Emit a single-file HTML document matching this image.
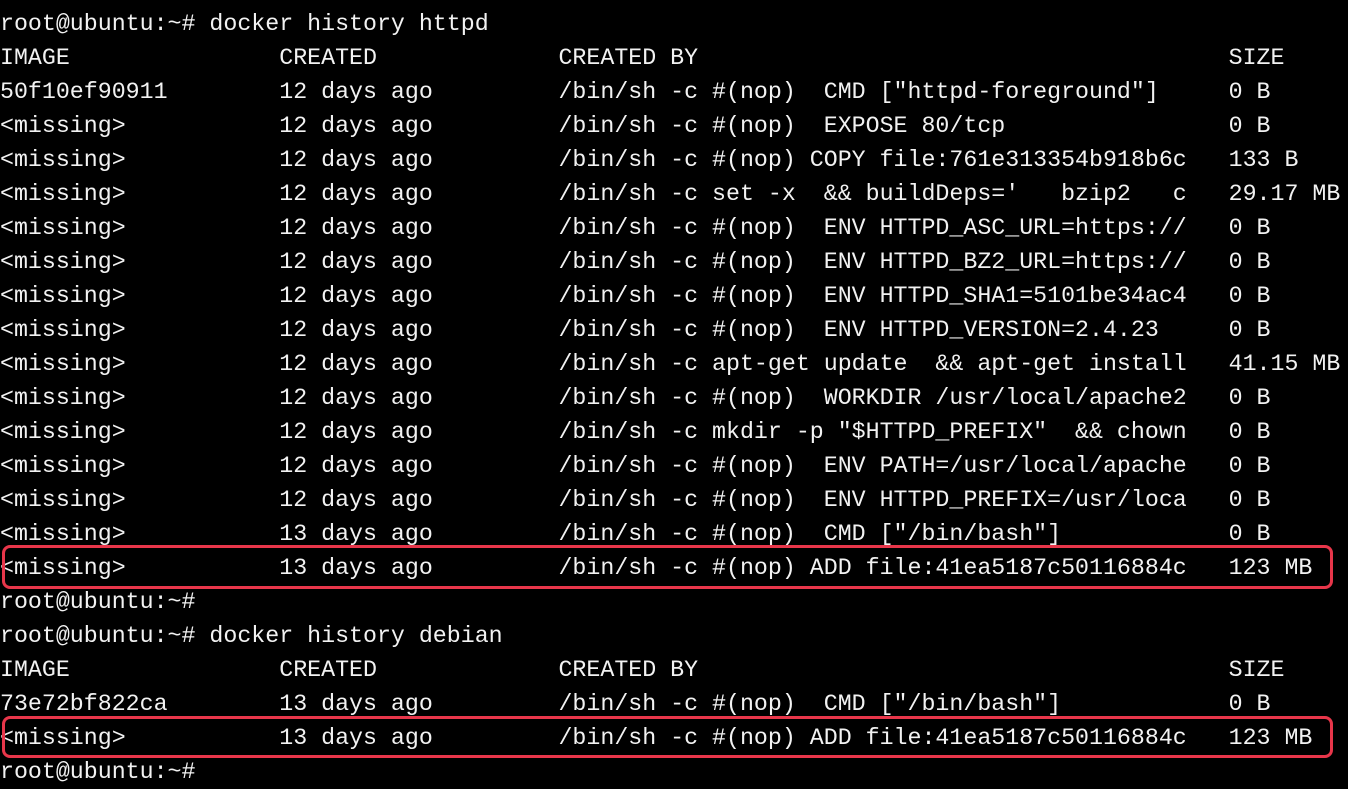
<!DOCTYPE html>
<html><head><meta charset="utf-8"><style>
html,body{margin:0;padding:0;background:#000;width:1348px;height:786px;overflow:hidden}
pre{margin:0;position:absolute;left:0;top:7px;font-family:"Liberation Mono",monospace;font-size:23.27px;line-height:34px;color:#f2f2f2;white-space:pre}
.box{position:absolute;border:3px solid #e8364a;border-radius:8px;box-sizing:border-box}
</style></head><body>
<pre>root@ubuntu:~# docker history httpd
IMAGE               CREATED             CREATED BY                                      SIZE
50f10ef90911        12 days ago         /bin/sh -c #(nop)  CMD ["httpd-foreground"]     0 B
&lt;missing&gt;           12 days ago         /bin/sh -c #(nop)  EXPOSE 80/tcp                0 B
&lt;missing&gt;           12 days ago         /bin/sh -c #(nop) COPY file:761e313354b918b6c   133 B
&lt;missing&gt;           12 days ago         /bin/sh -c set -x  &amp;&amp; buildDeps='   bzip2   c   29.17 MB
&lt;missing&gt;           12 days ago         /bin/sh -c #(nop)  ENV HTTPD_ASC_URL=https://   0 B
&lt;missing&gt;           12 days ago         /bin/sh -c #(nop)  ENV HTTPD_BZ2_URL=https://   0 B
&lt;missing&gt;           12 days ago         /bin/sh -c #(nop)  ENV HTTPD_SHA1=5101be34ac4   0 B
&lt;missing&gt;           12 days ago         /bin/sh -c #(nop)  ENV HTTPD_VERSION=2.4.23     0 B
&lt;missing&gt;           12 days ago         /bin/sh -c apt-get update  &amp;&amp; apt-get install   41.15 MB
&lt;missing&gt;           12 days ago         /bin/sh -c #(nop)  WORKDIR /usr/local/apache2   0 B
&lt;missing&gt;           12 days ago         /bin/sh -c mkdir -p "$HTTPD_PREFIX"  &amp;&amp; chown   0 B
&lt;missing&gt;           12 days ago         /bin/sh -c #(nop)  ENV PATH=/usr/local/apache   0 B
&lt;missing&gt;           12 days ago         /bin/sh -c #(nop)  ENV HTTPD_PREFIX=/usr/loca   0 B
&lt;missing&gt;           13 days ago         /bin/sh -c #(nop)  CMD ["/bin/bash"]            0 B
&lt;missing&gt;           13 days ago         /bin/sh -c #(nop) ADD file:41ea5187c50116884c   123 MB
root@ubuntu:~#
root@ubuntu:~# docker history debian
IMAGE               CREATED             CREATED BY                                      SIZE
73e72bf822ca        13 days ago         /bin/sh -c #(nop)  CMD ["/bin/bash"]            0 B
&lt;missing&gt;           13 days ago         /bin/sh -c #(nop) ADD file:41ea5187c50116884c   123 MB
root@ubuntu:~#</pre>
<div class="box" style="left:2px;top:545px;width:1331px;height:44px"></div>
<div class="box" style="left:2px;top:716px;width:1331px;height:42px"></div>
</body></html>
